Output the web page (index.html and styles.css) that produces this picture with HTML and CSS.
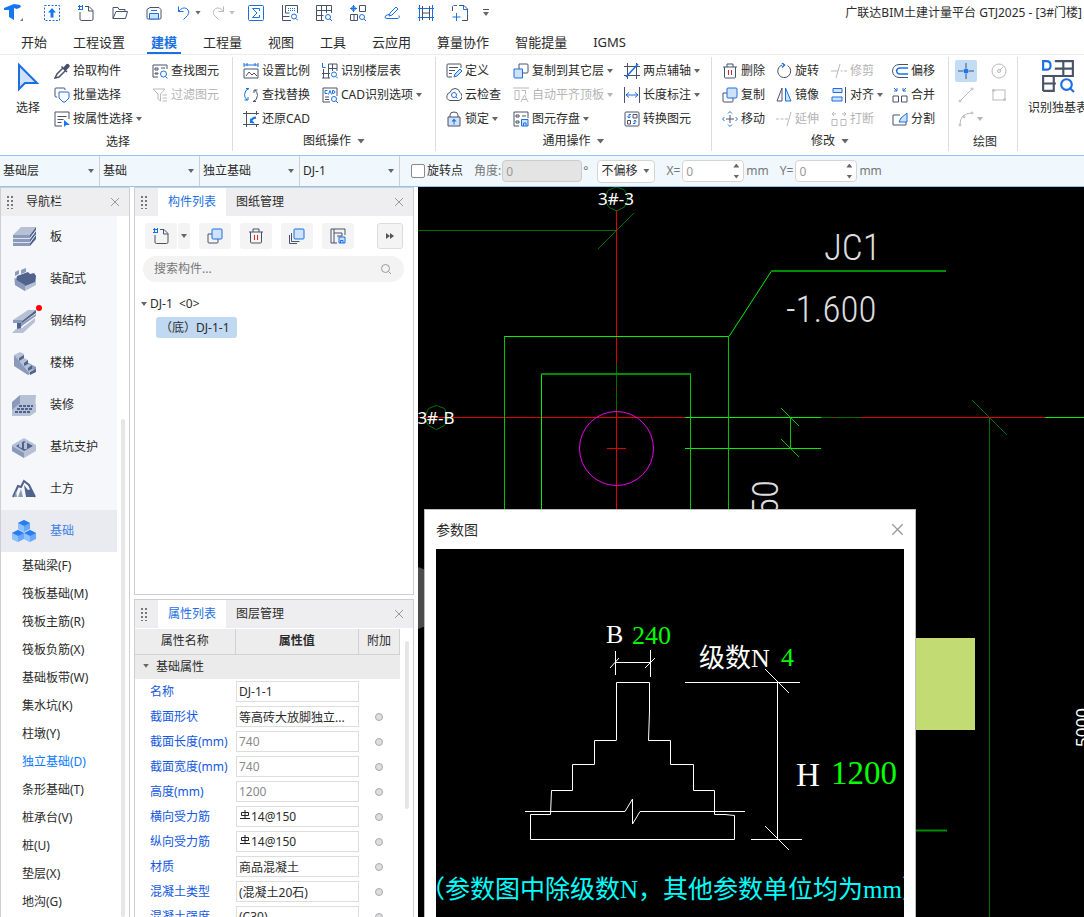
FILE: index.html
```html
<!DOCTYPE html>
<html lang="zh-CN">
<head>
<meta charset="utf-8">
<title>广联达BIM土建计量平台 GTJ2025</title>
<link rel="stylesheet" href="styles.css">
</head>
<body>
<svg class="defs" aria-hidden="true">
  <defs>
    <symbol id="logo" viewBox="0 0 20 20"><path class="fb" d="M0 5 10 1l6 1 1 2-4 2-3-1v12l-5-3V7L0 7z"/><path class="fg" d="M19 15v3h-3z"/></symbol>
    <symbol id="q-up" viewBox="0 0 16 16"><rect class="b" x=".5" y=".5" width="15" height="15" stroke-dasharray="2 1.500"/><path class="fb" d="M8 3l4 4.500H9.500v5h-3v-5H4z"/></symbol>
    <symbol id="q-new" viewBox="0 0 16 16"><path class="d" d="M7 1.500h4l4 4V14q0 1.500-1.500 1.500h-10Q2 15.500 2 14V7M10.500 1.500V6H15"/><path class="b" d="M0 1.500h5M0 4.500h5M1.500 0v5M4.500 0v5"/></symbol>
    <symbol id="q-open" viewBox="0 0 16 16"><path class="d" d="M1 13.500V2.500h5l1 2h6v2M1 13.500 4 6.500h11.500l-2 7z"/></symbol>
    <symbol id="q-save" viewBox="0 0 16 16"><path class="d" d="M4 2.500h9l2 2V13q0 1-1 1H2q-1 0-1-1V4.500z"/><path class="bf" d="M3.500 14V8.500h9V14z"/><path class="b" d="M5 5.500h6"/></symbol>
    <symbol id="q-undo" viewBox="0 0 16 16"><path class="b" d="M2.500 1.500v5h5M2.500 6.500q4-5 8-3 4 3 1 7l-4 4"/></symbol>
    <symbol id="q-redo" viewBox="0 0 16 16"><path class="g" d="M13.500 1.500v5h-5M13.500 6.500q-4-5-8-3-4 3-1 7l4 4"/></symbol>
    <symbol id="q-sum" viewBox="0 0 16 16"><rect class="b" x=".5" y=".5" width="15" height="15" rx="1"/><path class="b" d="M11.500 6V3.500h-7L9 8l-4.500 4.500h7V10"/></symbol>
    <symbol id="q-key" viewBox="0 0 16 16"><path class="d" d="M.5 0v15.500H9M3.500.5h12V8M3.500.5V8h4M.5 11.500h7"/><path class="b" d="M6 3.500h8M6 5.500h8" stroke-dasharray="1 1"/><circle class="b" cx="12" cy="11.500" r="2.500"/><path class="b" d="m14 13.500 2 2"/></symbol>
    <symbol id="q-grid" viewBox="0 0 16 16"><path class="d" d="M.5.5h15V8M.5.5v15H8M.5 5.500h15M.5 10.500h7M5.500.5v15M10.500.5V8"/><circle class="b" cx="12" cy="12" r="2.500"/><path class="b" d="m14 14 2 2"/></symbol>
    <symbol id="q-find" viewBox="0 0 16 16"><path class="d" d="M9.500.5h6v6h-6zM.5 9.500h7v6h-7zM4 9.500v6"/><path class="b" d="M3.500 0v7M0 3.500h7M1.500 3.500q0-2 2-2t2 2-2 2-2-2"/><circle class="b" cx="12" cy="12" r="2.500"/><path class="b" d="m14 14 2 2"/></symbol>
    <symbol id="q-pen" viewBox="0 0 16 16"><path class="b" d="M5 11l1-3 6-6 2 2-6 6zM5 9.500q-4 .5-4 2.500 0 1.500 2 1.500h11q2-1 1-3"/></symbol>
    <symbol id="q-beam" viewBox="0 0 16 16"><path class="b" d="M1.500 0v16M14.500 0v16M0 3.500h16M0 12.500h16"/><path class="d" d="M4.500 1v14M11.500 1v14M4.500 8h7"/></symbol>
    <symbol id="q-sel" viewBox="0 0 16 16"><path class="d" d="M7 .5h5l3.500 3.500v3M15.500 10v5.500H10M.5 6V1.500L1.500.5"/><path class="b" d="M2 .5h3M11.500.5V4.500h4M4.500 8v8M.5 12h8M15.500 7v3"/></symbol>
    <symbol id="arrow" viewBox="0 0 24 30"><path class="bf" stroke-width="2" d="M3 3v24l6-6h12z"/></symbol>
    <symbol id="pick" viewBox="0 0 16 16"><path class="df" d="M9 5l3-3.500q1.500-1.500 3 0t0 3L11.500 8z"/><path class="d" d="M7.500 3.500l5.500 5.500M9 5l-6 6-2 4 4-1 6-6" stroke-width="1.500"/></symbol>
    <symbol id="batch" viewBox="0 0 16 16"><path class="d" d="M3 10H2q-1 0-1-1V2q0-1 1-1h8q1 0 1 1v1"/><path class="bw" d="M5 5h9q1 0 1 1v5l-4 4H9l-4-4z"/></symbol>
    <symbol id="prop" viewBox="0 0 16 16"><path class="d" d="M8 15H1V1h14v7M3.500 5.500h9M3.500 8.500h6M3.500 11.500h4"/><path class="fb" d="M10 9v7l2-2h4z"/></symbol>
    <symbol id="find" viewBox="0 0 16 16"><path class="d" d="M6 14H1V2h14v4M3 5h3v2H3zM3 10h3v1H3zM9 5h4"/><circle class="b" cx="11.500" cy="11" r="3"/><path class="b" d="m13.500 13.500 2 2"/></symbol>
    <symbol id="filter" viewBox="0 0 16 16"><path class="g" d="M1 2h12L8.500 7v7L6 12V7zM10.500 8H15M10.500 11H15M10.500 14H15"/></symbol>
    <symbol id="scale" viewBox="0 0 16 16"><path class="b" d="M1 0v4M15 0v4M1 2h14M4 0v3M12 0v3"/><path class="d" d="M1 6h14v9H1zM3 13l3-4 3 3 2-2 3 3"/></symbol>
    <symbol id="swap" viewBox="0 0 16 16"><path class="b" d="M6 1.500q-4 1-4.500 6 0 3 2.500 5.500M1.500 13H5v-3M6 1.500H3"/><path class="d" d="M10 14.500q4-1 4.500-6 0-3-2.500-5.500M14.500 3H11v3M10 14.500h3"/></symbol>
    <symbol id="restore" viewBox="0 0 16 16"><path class="d" d="M3.500 0v16M0 2.500h16M0 13.500h16M13.500 0v4M13.500 13v3"/><path class="b" d="M13 6.500q-3 0-5 3" stroke-width="2"/><path class="fb" d="M7 7v5l5 .5z"/></symbol>
    <symbol id="floor" viewBox="0 0 16 16"><path class="d" d="M6.500 1H15v7M6.500 1v14M0 15h8M0 10.500h8M1.500 6v9M6.500 5.500H15M10.500 1v7"/><path class="b" d="M.5 0v4.500h3"/><circle class="b" cx="12" cy="11.500" r="2.500"/><path class="b" d="m14 13.500 2 2"/></symbol>
    <symbol id="cad" viewBox="0 0 16 16"><path class="d" d="M8 15H1V1h14v8M3 10h4M3 12.500h4"/><path class="b" d="M5.500 3.500H3v3h2.500M6.500 7.500l1.500-4 1.500 4M10.500 3.500q2.500 0 2.500 1.500t-2.500 1.500z"/><circle class="b" cx="12" cy="12" r="2.500"/><path class="b" d="m14 14 2 2"/></symbol>
    <symbol id="define" viewBox="0 0 16 16"><path class="d" d="M6 14H2q-1 0-1-1V2q0-1 1-1h12q1 0 1 1v3M3 4.500h9M3 7.500h6M3 10.500h3"/><path class="bf" d="m8 14 1-3 5-5 2 2-5 5z"/></symbol>
    <symbol id="cloud" viewBox="0 0 16 16"><path class="d" d="M4 13.500q-4-1-3-5 1-3 3-3 1-4 5-4t5 4q2 1 2 4t-3 4z"/><circle class="b" cx="8" cy="8" r="2.500"/><path class="b" d="m10 10 1.500 1.500"/></symbol>
    <symbol id="lock" viewBox="0 0 16 16"><path class="d" d="M4 6V4q0-3 4-3t4 3v2"/><path class="lk" d="M2 6h12v9H2z"/><path class="fb" d="M8 7.500l2.500 3h-2v3h-1v-3h-2z"/></symbol>
    <symbol id="copyto" viewBox="0 0 16 16"><path class="d" d="M6 1h8q1 0 1 1v7q0 1-1 1H6z"/><path class="bf" d="M1 6h8.500v9H2q-1 0-1-1z"/></symbol>
    <symbol id="align-top" viewBox="0 0 16 16"><path class="g" d="M0 1h16M2 3.500h4v9H2zM8.500 3.500h4v4M8 15l3.500-7L15 15M9.500 12.500h4"/></symbol>
    <symbol id="store" viewBox="0 0 16 16"><path class="d" d="M6 15H1V1h14v6M3 4h3v2H3zM3 10h3v2H3zM9 5h4"/><path class="bf" d="M8.500 8.500H15V15H8.500zM10.500 15v-3H13v3"/></symbol>
    <symbol id="axis" viewBox="0 0 16 16"><path class="d" d="M3.500 0v16M12.500 0v16M0 3.500h16M0 12.500h16"/><path class="b" d="M2 14 14 1" stroke-width="1.500"/></symbol>
    <symbol id="length" viewBox="0 0 16 16"><path class="d" d="M.5 0v16M15.500 0v16"/><path class="b" d="M2 8h12M5 5.500 2 8l3 2.500M11 5.500 14 8l-3 2.500"/></symbol>
    <symbol id="convert" viewBox="0 0 16 16"><rect class="d" x="1" y="1" width="14" height="14" rx="1"/><path class="d" d="M9 3.500h4V7H9zM3.500 9.500h3V13h-3z"/><path class="b" d="M7 3.500H5V7M3.500 5.500 5 7l1.500-1.500M9 12.500h2V9M9.500 10.500 11 9l1.500 1.500"/></symbol>
    <symbol id="trash" viewBox="0 0 16 16"><path class="d" d="M1 4h14M5 4V1h6v3M2.500 4v10q0 1 1 1h9q1 0 1-1V4"/><path class="r" d="M6.500 7v5M9.500 7v5"/></symbol>
    <symbol id="copy" viewBox="0 0 16 16"><path class="d" d="M5 6H1v8q0 1 1 1h8q1 0 1-1v-3"/><rect class="bf" x="5" y="1" width="10" height="10" rx="1"/></symbol>
    <symbol id="move" viewBox="0 0 16 16"><path class="d" d="M8 4v8M4 8h8"/><path class="b" d="M6 2.500 8 .5l2 2M6 13.500l2 2 2-2M2.500 6l-2 2 2 2M13.500 6l2 2-2 2"/></symbol>
    <symbol id="rotate" viewBox="0 0 16 16"><path class="d" d="M11.500 2.500A6.500 6.500 0 1 1 6 2"/><path class="b" d="M6 0l2.500 2L6 4.500" stroke-width="1.500"/></symbol>
    <symbol id="mirror" viewBox="0 0 16 16"><path class="d" d="M6 1v13H1z"/><path class="bf" d="M9.500 1v13H15z"/></symbol>
    <symbol id="extend" viewBox="0 0 16 16"><path class="g" d="M0 8h3M4.500 8h3M9 8h3M15 1 11 15"/></symbol>
    <symbol id="trim" viewBox="0 0 16 16"><path class="g" d="M0 8h7M9.500 8h2M13 8h3M9 1 5 15"/></symbol>
    <symbol id="align" viewBox="0 0 16 16"><path class="bf" d="M2 1.500h9v4H2zM1 10h10v4H1z"/><path class="d" d="M14.500 0v16"/></symbol>
    <symbol id="break" viewBox="0 0 16 16"><path class="g" d="M1 8.500h5v6H1zM10 8.500h5v6h-5zM5 3H1l2-2M1 3l2 2M11 3h4l-2-2M15 3l-2 2"/></symbol>
    <symbol id="offset" viewBox="0 0 16 16"><path class="d" d="M16 1.500H7Q1 2 .5 8q.5 6 6.500 6.500h9"/><path class="b" d="M16 5H8Q5 5 4.500 8 5 11 8 11h8" stroke-width="1.500"/></symbol>
    <symbol id="merge" viewBox="0 0 16 16"><path class="d" d="M1 9h5.500v6H1zM9.500 9H15v6H9.500z"/><path class="b" d="m2 1 3 3M5 1v3H2M14 1l-3 3M11 1v3h3"/></symbol>
    <symbol id="split" viewBox="0 0 16 16"><path class="d" d="M8 4H1v10h13v-3"/><path class="bf" d="m7 11 2-4 6-5v9z"/></symbol>
    <symbol id="point" viewBox="0 0 16 16"><path class="d" d="M8 0v5M8 11v5M0 8h5M11 8h5"/><circle class="fb" cx="8" cy="8" r="2.500"/></symbol>
    <symbol id="circle" viewBox="0 0 16 16"><circle class="g" cx="8" cy="8" r="7"/><circle class="g" cx="8" cy="8" r="1.500"/><path class="g" d="m9 7 3-3"/></symbol>
    <symbol id="line" viewBox="0 0 16 16"><path class="g" d="M3 13 13 3"/><circle class="g" cx="2" cy="14" r="1"/><circle class="g" cx="14" cy="2" r="1"/></symbol>
    <symbol id="rect" viewBox="0 0 16 16"><rect class="g" x="2" y="3" width="12" height="10"/><circle class="g" cx="2.500" cy="3.500" r="1"/><circle class="g" cx="13.500" cy="12.500" r="1"/></symbol>
    <symbol id="arc" viewBox="0 0 16 16"><path class="g" d="M2 13Q2 3 13 2"/><circle class="g" cx="2" cy="14" r="1"/><circle class="g" cx="14" cy="2" r="1"/><circle class="g" cx="6" cy="6" r="1"/></symbol>
    <symbol id="dgrid" viewBox="0 0 32 32"><path class="d" stroke-width="2" d="M13 2h17v15M13 9h17M21 2v14H2v14M12 16v14H2M2 23h12M21 9v7h9"/><path class="b" stroke-width="2" d="M2 2h3q4 0 4 4t-4 4H2z"/><circle class="b" stroke-width="2" cx="24" cy="24" r="5"/><path class="b" stroke-width="2" d="m27 27 4 4"/></symbol>
    <symbol id="layers" viewBox="0 0 16 16"><path class="d" d="M.5 7v8.500H8M2.500 5v8.500h8"/><rect class="bf" x="5" y="1" width="10" height="10" rx="1"/></symbol>
    <symbol id="tmpl" viewBox="0 0 16 16"><path class="d" d="M7 15H1V1h14v6M4 1v14M4 5h8v3M7 8h5"/><path class="bf" d="M9 9h6v6H9zM10.500 15v-2.500H13V15"/></symbol>
    <symbol id="glass" viewBox="0 0 12 12"><circle class="m" cx="5.500" cy="5.500" r="4"/><path class="m" d="m8.500 8.500 2.500 2.500"/></symbol>
    <symbol id="close" viewBox="0 0 10 10"><path class="m" d="m1 1 8 8M9 1 1 9"/></symbol>
    <symbol id="n-slab" viewBox="0 0 24 24"><path class="n2" d="M1 10h17v11H1z"/><path class="n1" d="M1 10 9 2h15l-6 8z"/><path class="n3" d="m18 10 6-8v3l-6 8zM18 14l6-8v4l-6 7zM18 18l6-8v4l-6 7z"/><path class="nl" d="M1 13.500h17l6-8M1 17.500h17l6-8"/></symbol>
    <symbol id="n-pre" viewBox="0 0 24 24"><path class="n1" d="M2 11 24 8v10l-11 6-10-6z"/><path class="n3" d="m5 9 11-4 2 2 4-1 2 3-1 6-10 4-9-5z"/><path class="n2" d="m3 12 10 6v6L3 18zM3 5l4-2v4L3 9zM9 3l5-2v4L9 7z"/></symbol>
    <symbol id="n-steel" viewBox="0 0 24 24"><path class="n1" d="M1 11 16 1h8L10 12z"/><path class="n2" d="M1 11h9v3L24 5v2l-13 9-6 6v-8H1z"/><path class="n3" d="M5 14h4v7H5zM10 12 24 1v3L10 14z"/><path class="n1" d="m10 19 13-10v4L11 24H0l4-4z"/></symbol>
    <symbol id="n-stair" viewBox="0 0 24 24"><path class="n2" d="M2 4v11l14 9 8-4v-4z"/><path class="n1" d="m2 4 6-3 4 2v4l4 2v4l4 1v4l4 2-6 3z"/><path class="n3" d="m7 7 5-3v3l-5 3zM12 12l4-3v4l-4 2zM16 17l4-3v4l-4 2zM18 21l6-3v3l-6 3z"/></symbol>
    <symbol id="n-deco" viewBox="0 0 24 24"><path class="n1" d="M8 2h16l-1 14H8z"/><path class="n2" d="m0 9 8-7v10l-8 7z"/><path class="n1" d="m0 17 7-6h17v8l-6 4H0z"/><path class="nd" d="M7 13h14M5 16h15M3 19h15"/></symbol>
    <symbol id="n-pit" viewBox="0 0 24 24"><path class="n1" d="m0 10 12-7 12 7v6l-12 7-12-7z"/><path class="n3" d="m4 11 8-5 9 5-9 5z"/><path class="n2" d="m0 11 12 7v5L0 16z"/><path class="n1" d="M7 9l3-2v6l-3-1zM12 8l3-2v8h-3z"/></symbol>
    <symbol id="n-earth" viewBox="0 0 24 24"><path class="ne" d="m1 20 5-11 3 1 3-6 5 4 6 12"/><path class="n2" d="m9 12-3 8h5zM4 14l-2 6h3z"/><path class="n3" d="m12 8 2 12h9l-4-8-3 1z"/></symbol>
    <symbol id="n-base" viewBox="0 0 24 24"><path class="c1" d="m6 4 6-3 6 3v6l-6 3-6-3z"/><path class="c2" d="m6 4 6-3 6 3-6 3z"/><path class="c1" d="m0 14 6-3 6 3v6l-6 3-6-3z"/><path class="c2" d="m0 14 6-3 6 3-6 3z"/><path class="c1" d="m12 14 6-3 6 3v6l-6 3-6-3z"/><path class="c2" d="m12 14 6-3 6 3-6 3z"/><path class="c3" d="M6 4l6 3v6l-6-3zM0 14l6 3v6l-6-3zM12 14l6 3v6l-6-3z"/></symbol>
  </defs>
</svg>

<header class="titlebar">
  <svg class="logo"><use href="#logo"/></svg>
  <div class="quick">
    <button aria-label="升级"><svg><use href="#q-up"/></svg></button>
    <button aria-label="新建"><svg><use href="#q-new"/></svg></button>
    <button aria-label="打开"><svg><use href="#q-open"/></svg></button>
    <button aria-label="保存"><svg><use href="#q-save"/></svg></button>
    <button aria-label="撤销" class="has-caret"><svg><use href="#q-undo"/></svg><i class="caret"></i></button>
    <button aria-label="恢复" class="has-caret dim"><svg><use href="#q-redo"/></svg><i class="caret"></i></button>
    <button aria-label="汇总"><svg><use href="#q-sum"/></svg></button>
    <button aria-label="查看"><svg><use href="#q-key"/></svg></button>
    <button aria-label="查看报表"><svg><use href="#q-grid"/></svg></button>
    <button aria-label="查找"><svg><use href="#q-find"/></svg></button>
    <button aria-label="编辑"><svg><use href="#q-pen"/></svg></button>
    <button aria-label="梁"><svg><use href="#q-beam"/></svg></button>
    <button aria-label="框选"><svg><use href="#q-sel"/></svg></button>
    <button aria-label="更多" class="more"><i class="caret"></i></button>
  </div>
  <div class="app-title">广联达BIM土建计量平台 GTJ2025 - [3#门楼]</div>
</header>

<nav class="menu">
  <button>开始</button><button>工程设置</button><button class="on">建模</button><button>工程量</button><button>视图</button><button>工具</button><button>云应用</button><button>算量协作</button><button>智能提量</button><button>IGMS</button>
</nav>

<section class="ribbon">
  <div class="group g-select">
    <div class="tools">
      <button class="big"><svg><use href="#arrow"/></svg>选择</button>
      <div class="col">
        <button class="tool"><svg><use href="#pick"/></svg>拾取构件</button>
        <button class="tool"><svg><use href="#batch"/></svg>批量选择</button>
        <button class="tool"><svg><use href="#prop"/></svg>按属性选择<i class="caret"></i></button>
      </div>
      <div class="col">
        <button class="tool"><svg><use href="#find"/></svg>查找图元</button>
        <button class="tool" disabled><svg><use href="#filter"/></svg>过滤图元</button>
      </div>
    </div>
    <div class="caption">选择</div>
  </div>
  <div class="group g-paper">
    <div class="tools">
      <div class="col">
        <button class="tool"><svg><use href="#scale"/></svg>设置比例</button>
        <button class="tool"><svg><use href="#swap"/></svg>查找替换</button>
        <button class="tool"><svg><use href="#restore"/></svg>还原CAD</button>
      </div>
      <div class="col">
        <button class="tool"><svg><use href="#floor"/></svg>识别楼层表</button>
        <button class="tool"><svg><use href="#cad"/></svg>CAD识别选项<i class="caret"></i></button>
      </div>
    </div>
    <div class="caption">图纸操作<i class="caret wide"></i></div>
  </div>
  <div class="group g-common">
    <div class="tools">
      <div class="col">
        <button class="tool"><svg><use href="#define"/></svg>定义</button>
        <button class="tool"><svg><use href="#cloud"/></svg>云检查</button>
        <button class="tool"><svg><use href="#lock"/></svg>锁定<i class="caret"></i></button>
      </div>
      <div class="col">
        <button class="tool"><svg><use href="#copyto"/></svg>复制到其它层<i class="caret"></i></button>
        <button class="tool" disabled><svg><use href="#align-top"/></svg>自动平齐顶板<i class="caret"></i></button>
        <button class="tool"><svg><use href="#store"/></svg>图元存盘<i class="caret"></i></button>
      </div>
      <div class="col">
        <button class="tool"><svg><use href="#axis"/></svg>两点辅轴<i class="caret"></i></button>
        <button class="tool"><svg><use href="#length"/></svg>长度标注<i class="caret"></i></button>
        <button class="tool"><svg><use href="#convert"/></svg>转换图元</button>
      </div>
    </div>
    <div class="caption">通用操作<i class="caret wide"></i></div>
  </div>
  <div class="group g-modify">
    <div class="tools">
      <div class="col">
        <button class="tool"><svg><use href="#trash"/></svg>删除</button>
        <button class="tool"><svg><use href="#copy"/></svg>复制</button>
        <button class="tool"><svg><use href="#move"/></svg>移动</button>
      </div>
      <div class="col">
        <button class="tool"><svg><use href="#rotate"/></svg>旋转</button>
        <button class="tool"><svg><use href="#mirror"/></svg>镜像</button>
        <button class="tool" disabled><svg><use href="#extend"/></svg>延伸</button>
      </div>
      <div class="col">
        <button class="tool" disabled><svg><use href="#trim"/></svg>修剪</button>
        <button class="tool"><svg><use href="#align"/></svg>对齐<i class="caret"></i></button>
        <button class="tool" disabled><svg><use href="#break"/></svg>打断</button>
      </div>
      <div class="col">
        <button class="tool"><svg><use href="#offset"/></svg>偏移</button>
        <button class="tool"><svg><use href="#merge"/></svg>合并</button>
        <button class="tool"><svg><use href="#split"/></svg>分割</button>
      </div>
    </div>
    <div class="caption">修改<i class="caret wide"></i></div>
  </div>
  <div class="group g-draw">
    <div class="tools">
      <div class="col">
        <button class="tool on" aria-label="点"><svg><use href="#point"/></svg></button>
        <button class="tool" aria-label="直线"><svg><use href="#line"/></svg></button>
        <button class="tool" aria-label="弧" disabled><svg><use href="#arc"/></svg><i class="caret"></i></button>
      </div>
      <div class="col">
        <button class="tool" aria-label="圆"><svg><use href="#circle"/></svg></button>
        <button class="tool" aria-label="矩形"><svg><use href="#rect"/></svg></button>
      </div>
    </div>
    <div class="caption">绘图</div>
  </div>
  <div class="group g-recog">
    <div class="tools"><button class="big"><svg><use href="#dgrid"/></svg>识别独基表</button></div>
  </div>
</section>

<section class="options">
  <div class="pick"><select aria-label="楼层"><option>基础层</option></select><i class="caret"></i></div>
  <div class="pick"><select aria-label="类别"><option>基础</option></select><i class="caret"></i></div>
  <div class="pick"><select aria-label="构件类型"><option>独立基础</option></select><i class="caret"></i></div>
  <div class="pick"><select aria-label="构件"><option>DJ-1</option></select><i class="caret"></i></div>
  <label class="check"><input type="checkbox">旋转点</label>
  <label class="field angle">角度:<input type="text" value="0" disabled>°</label>
  <div class="pick boxed"><select aria-label="偏移方式"><option>不偏移</option></select><i class="caret"></i></div>
  <label class="field">X=<span class="spin"><input type="text" value="0"><i class="caret up"></i><i class="caret"></i></span>mm</label>
  <label class="field">Y=<span class="spin"><input type="text" value="0"><i class="caret up"></i><i class="caret"></i></span>mm</label>
</section>

<main class="work">
  <aside class="navigator">
    <div class="bar"><i class="grip"></i><span>导航栏</span><button class="x" aria-label="关闭"><svg><use href="#close"/></svg></button></div>
    <div class="scroller">
      <div class="lists">
        <ul class="cats">
          <li><svg><use href="#n-slab"/></svg>板</li>
          <li><svg><use href="#n-pre"/></svg>装配式</li>
          <li class="dot"><svg><use href="#n-steel"/></svg>钢结构</li>
          <li><svg><use href="#n-stair"/></svg>楼梯</li>
          <li><svg><use href="#n-deco"/></svg>装修</li>
          <li><svg><use href="#n-pit"/></svg>基坑支护</li>
          <li><svg><use href="#n-earth"/></svg>土方</li>
          <li class="on"><svg><use href="#n-base"/></svg>基础</li>
        </ul>
        <ul class="subs">
          <li>基础梁(F)</li><li>筏板基础(M)</li><li>筏板主筋(R)</li><li>筏板负筋(X)</li><li>基础板带(W)</li><li>集水坑(K)</li><li>柱墩(Y)</li><li class="on">独立基础(D)</li><li>条形基础(T)</li><li>桩承台(V)</li><li>桩(U)</li><li>垫层(X)</li><li>地沟(G)</li>
        </ul>
      </div>
      <div class="track"><div class="thumb"></div></div>
    </div>
  </aside>

  <div class="side">
    <section class="panel components">
      <div class="bar"><i class="grip"></i><button class="tab on">构件列表</button><button class="tab">图纸管理</button><button class="x" aria-label="关闭"><svg><use href="#close"/></svg></button></div>
      <div class="actions">
        <div class="split"><button aria-label="新建"><svg><use href="#q-new"/></svg></button><button class="drop" aria-label="新建选项"><i class="caret"></i></button></div>
        <button aria-label="复制"><svg><use href="#copy"/></svg></button>
        <button aria-label="删除"><svg><use href="#trash"/></svg></button>
        <button aria-label="层间复制"><svg><use href="#layers"/></svg></button>
        <button aria-label="存档"><svg><use href="#tmpl"/></svg></button>
        <button class="next" aria-label="更多"><i class="fwd"></i><i class="fwd"></i></button>
      </div>
      <label class="search"><input type="text" placeholder="搜索构件..." aria-label="搜索构件"><svg><use href="#glass"/></svg></label>
      <div class="tree">
        <div class="node"><i class="caret"></i>DJ-1&nbsp; &lt;0&gt;</div>
        <div class="leaf">（底）DJ-1-1</div>
      </div>
    </section>

    <section class="panel props">
      <div class="bar"><i class="grip"></i><button class="tab on">属性列表</button><button class="tab">图层管理</button><button class="x" aria-label="关闭"><svg><use href="#close"/></svg></button></div>
      <div class="sheet">
        <table>
          <thead><tr><th class="plain">属性名称</th><th>属性值</th><th class="plain">附加</th></tr></thead>
          <tbody>
            <tr class="section"><td colspan="3"><i class="caret"></i>基础属性</td></tr>
            <tr><td><label for="p1">名称</label></td><td><input id="p1" value="DJ-1-1"></td><td></td></tr>
            <tr><td><label for="p2">截面形状</label></td><td><input id="p2" value="等高砖大放脚独立..."></td><td><input type="radio" aria-label="附加截面形状"></td></tr>
            <tr><td><label for="p3">截面长度(mm)</label></td><td><input id="p3" class="ro" value="740" readonly></td><td><input type="radio" aria-label="附加截面长度"></td></tr>
            <tr><td><label for="p4">截面宽度(mm)</label></td><td><input id="p4" class="ro" value="740" readonly></td><td><input type="radio" aria-label="附加截面宽度"></td></tr>
            <tr><td><label for="p5">高度(mm)</label></td><td><input id="p5" class="ro" value="1200" readonly></td><td><input type="radio" aria-label="附加高度"></td></tr>
            <tr><td><label for="p6">横向受力筋</label></td><td class="bar-mark"><svg viewBox="0 0 10 10"><path d="M5 0v9M1.500 2.500h7v3h-7zM0 8.500h10"/></svg><input id="p6" value="14@150"></td><td><input type="radio" aria-label="附加横向受力筋"></td></tr>
            <tr><td><label for="p7">纵向受力筋</label></td><td class="bar-mark"><svg viewBox="0 0 10 10"><path d="M5 0v9M1.500 2.500h7v3h-7zM0 8.500h10"/></svg><input id="p7" value="14@150"></td><td><input type="radio" aria-label="附加纵向受力筋"></td></tr>
            <tr><td><label for="p8">材质</label></td><td><input id="p8" value="商品混凝土"></td><td><input type="radio" aria-label="附加材质"></td></tr>
            <tr><td><label for="p9">混凝土类型</label></td><td><input id="p9" value="(混凝土20石)"></td><td><input type="radio" aria-label="附加混凝土类型"></td></tr>
            <tr><td><label for="p10">混凝土强度</label></td><td><input id="p10" value="(C30)"></td><td><input type="radio" aria-label="附加混凝土强度"></td></tr>
          </tbody>
        </table>
        <div class="track"><div class="thumb"></div></div>
      </div>
    </section>
  </div>

  <div class="canvas">
    <svg class="drawing">
      <g transform="translate(-418 -187)">
        <g class="line dark"><path d="M418 230.500H616"/><path d="M598 249l36-36"/><path d="M989.500 417V917"/><path d="M972 400l35 35"/></g>
        <path class="line red" d="M616.500 210V364M616.500 388v2M616.500 411V520M418 417.500H685M833 417.500h2M861 417.500H1045M607 448.500h19"/>
        <path class="line dark" d="M616.500 364v24M616.500 390v21M821 417.500h12M835 417.500h26"/>
        <path class="line lime" d="M504 336.500H729L771.500 271M541.500 374V520M685 417.500H821M685 448.500H821M1045 417.500H1400"/>
        <path class="line green" d="M504.500 336V520M728.500 336V520M690.500 374V520M790.500 417v32M781 408l18 18M781 439l18 18"/>
        <path class="line heavy" d="M771 271H946M541 374H691M915 830.500H947"/>
        <circle class="magenta" cx="616.500" cy="448.500" r="37"/>
        <path class="bubble" d="M616.500 187l8 3 4 8-4 9-8 4-8-4-4-9 4-8zM436.500 405.500l8 3 4 9-4 8-8 4-8-4-4-8 4-9z"/>
        <rect class="block" x="910" y="638" width="65" height="92"/>
        <text class="axis-name" x="616" y="205" text-anchor="middle">3#-3</text>
        <text class="axis-name" x="436" y="424" text-anchor="middle">3#-B</text>
        <text class="cad-text" x="824" y="260">JC1</text>
        <text class="cad-text" x="786" y="322">-1.600</text>
        <text class="cad-text" transform="translate(778 480) rotate(-90)" text-anchor="end">50</text>
        <text class="axis-name" transform="translate(1088 747) rotate(-90)">5000</text>
      </g>
    </svg>
    <div class="handle"></div>
    <section class="dialog">
      <div class="dialog-head"><h2>参数图</h2><button aria-label="关闭"><svg><use href="#close"/></svg></button></div>
      <svg class="section-view">
        <g transform="translate(-436 -549)">
          <path class="line white" d="M616.500 740V682.500H649.500V711L648.500 740.500H670.500V764.500H693.500V790.500H714.500V814.500H725L734.500 815.500V839.500H530.500V814.500H550.500L551.500 790.500H572.500V764.500H594.500V740.500H616.500"/>
          <path class="line white" d="M525 811.500H625L632.500 799V824L640 811.500H745"/>
          <path class="line white" d="M615.500 651V675M650.500 650V677M615 662.500H650M610 668l9-10M645 668l10-10"/>
          <path class="line white" d="M685 682.500H800M777.500 682V839M765 669l24 24M751 839.500H802M765 826l24 24"/>
          <text class="w" x="606" y="643">B</text><text class="v" x="632" y="644">240</text>
          <text class="w" x="699" y="667">级数N</text><text class="v" x="781" y="666">4</text>
          <text class="w lg" x="796" y="786">H</text><text class="v lg" x="831" y="784">1200</text>
          <text class="note" x="420" y="898">（参数图中除级数N，其他参数单位均为mm）</text>
        </g>
      </svg>
    </section>
  </div>
</main>
</body>
</html>
```

FILE: styles.css
```css
:root { --ink: #2b2b2b; --blue: #1a6fe3; --slate: #48536a; --line: #cfcfd2; --soft: #eeeef0; }
* { box-sizing: border-box; }
body {
  margin: 0; height: 100vh; display: flex; flex-direction: column; overflow: hidden;
  background: #fff; color: var(--ink);
  font: 12px/18px "Noto Sans", "Noto Sans CJK SC", sans-serif;
}
button, input, select { font: inherit; color: inherit; }
button { border: 0; background: none; padding: 0; white-space: nowrap; }
ul { list-style: none; margin: 0; padding: 0; }
svg { display: block; flex: none; }
.defs { position: absolute; width: 0; height: 0; }

/* icon strokes */
.d, .b, .g, .m, .r, .bf, .bw, .lk { fill: none; stroke: var(--slate); }
.b { stroke: var(--blue); }
.g { stroke: #b9b9b9; }
.m { stroke: #999; }
.r { stroke: #d9262c; }
.bf { fill: #cfe2fa; stroke: var(--blue); }
.bw { fill: #fff; stroke: var(--blue); }
.lk { fill: #cfe2fa; }
.df { fill: var(--slate); }
.fb { fill: #1677f0; }
.fg { fill: #777; }
.n1 { fill: #b6c1d6; } .n2 { fill: #8b9abb; } .n3 { fill: #50638c; }
.nl { fill: none; stroke: #dce3ef; }
.nd { fill: none; stroke: #50638c; stroke-width: 2; stroke-dasharray: 3 1; }
.ne { fill: none; stroke: #50638c; stroke-width: 2; }
.c1 { fill: #66a9fb; } .c2 { fill: #2b7cf4; } .c3 { fill: #8cc0ff; }

.caret { flex: none; width: 6px; height: 4px; background: #666; clip-path: polygon(0 0, 100% 0, 50% 100%); }
.caret.wide { width: 8px; height: 5px; }
.caret.up { clip-path: polygon(50% 0, 100% 100%, 0 100%); }

/* title bar */
.titlebar { display: flex; align-items: center; height: 25px; flex: none; }
.logo { width: 20px; height: 20px; margin: 0 20px 0 4px; }
.quick { display: flex; gap: 18px; }
.quick button { width: 16px; display: flex; align-items: center; }
.quick svg { width: 16px; height: 16px; }
.quick .has-caret { width: 25px; gap: 3px; margin: 0 -5px 0 -4px; }
.dim .caret { background: #bbb; }
.quick .more { width: 6px; margin-left: -3px; flex-direction: column; justify-content: center; gap: 2px; }
.more::before { content: ""; width: 6px; height: 1px; background: #555; }
.app-title { margin-left: auto; padding-right: 2px; white-space: nowrap; }

.menu { display: flex; gap: 18px; height: 30px; padding: 0 17px; flex: none; border-bottom: 1px solid #ececec; font-size: 13px; }
.menu button { height: 29px; padding: 7px 4px 0; border-bottom: 2px solid transparent; }
.menu .on { color: var(--blue); font-weight: bold; border-color: var(--blue); }

/* ribbon */
.ribbon { display: flex; height: 100px; flex: none; overflow: hidden; }
.group { display: flex; flex-direction: column; flex: none; border-right: 1px solid #ddd; margin: 2px 0 4px; }
.tools { display: grid; height: 74px; padding: 2px 0 0 10px; align-content: start; }
.col { display: flex; flex-direction: column; align-items: flex-start; }
.tool { display: flex; align-items: center; gap: 3px; height: 24px; }
.tool svg { width: 16px; height: 16px; }
.tool:disabled { color: #b4b4b4; }
.tool:disabled .caret { background: #b4b4b4; }
.big { display: flex; flex-direction: column; align-items: center; }
.caption { display: flex; align-items: center; justify-content: center; gap: 6px; height: 24px; }
.g-select { width: 233px; }
.g-select .tools { grid-template-columns: 44px 98px 1fr; }
.g-select .caption { padding: 2px 0 0 4px; }
.big svg { width: 24px; height: 30px; margin: 3px 0 7px; }
.g-select .big { width: 36px; }
.g-paper { width: 203px; }
.g-paper .tools { grid-template-columns: 79px 1fr; }
.g-common { width: 276px; }
.g-common .tools { grid-template-columns: 67px 111px 1fr; }
.g-modify { width: 237px; }
.g-modify .tools { grid-template-columns: 54px 55px 61px 1fr; }
.g-draw { width: 69px; }
.g-draw .tools { grid-template-columns: 33px 1fr; padding-left: 6px; }
.g-draw .caption { padding: 2px 0 0 4px; }
.g-draw .tool { padding: 0 3px; }
.g-draw .on { background: #c3dbf5; height: 22px; margin: 1px 0; border-radius: 2px; }
.g-recog { flex: 1; border: 0; min-width: 76px; }
.g-recog .tools { justify-content: start; }
.g-recog .big svg { width: 34px; height: 34px; margin: 0 0 6px; }

/* option bar */
.options { display: flex; align-items: center; height: 32px; flex: none; background: #f1f8fd; border: solid #92c3f6; border-width: 1px 0; white-space: nowrap; color: #777; }
.pick { width: 100px; height: 30px; display: flex; align-items: center; border-right: 1px solid var(--line); padding: 0 5px 0 3px; color: var(--ink); }
.pick select { appearance: none; border: 0; background: none; flex: 1; min-width: 0; padding: 0; }
.check { display: flex; align-items: center; gap: 2px; margin-left: 11px; color: var(--ink); }
.check input { appearance: none; width: 14px; height: 14px; margin: 0; border: 1px solid #8a8a8a; border-radius: 2px; background: #fff; }
.field { display: flex; align-items: center; gap: 2px; margin-left: 11px; }
.field input { height: 22px; border: 1px solid #d5d5d5; border-radius: 4px; background: #fff; padding: 0 3px; width: 62px; color: #999; }
.field.angle { gap: 1px; }
.angle input { width: 80px; background: #e4e4e4; border-color: #ccc; }
.pick.boxed { width: 58px; height: 23px; margin: 0 0 0 9px; border: 1px solid #d5d5d5; border-radius: 4px; background: #fff; }
.spin { display: grid; grid-template-columns: 1fr 6px 5px; align-items: center; }
.spin input { grid-area: 1 / 1 / 3 / 4; }
.spin .caret { grid-area: 2 / 2; }
.spin .caret.up { grid-area: 1 / 2; }

/* work area */
.work { display: flex; flex: 1; min-height: 0; }
.bar { display: flex; align-items: center; flex: none; height: 28px; background: var(--soft); }
.grip { width: 8px; height: 14px; margin: 0 6px 0 5px; background: radial-gradient(circle, #777 1px, transparent 1px) 0 0 / 4px 4px; }
.x { margin-left: auto; padding-right: 9px; }
.x svg { width: 10px; height: 10px; }
.track { flex: none; width: 4px; }
.thumb { height: 100%; border-radius: 2px; background: #e6e6e6; }

.navigator { width: 130px; flex: none; border: 1px solid var(--line); border-bottom: 0; display: flex; flex-direction: column; }
.navigator .bar span { margin-left: 6px; }
.scroller { display: flex; flex: 1; min-height: 0; gap: 4px; }
.lists { width: 116px; overflow: hidden; }
.scroller .track { padding-top: 203px; }
.cats { background: #f5f7fa; }
.cats li { display: flex; align-items: center; height: 42px; padding-left: 11px; gap: 14px; position: relative; }
.cats svg { width: 24px; height: 24px; }
.cats .on { background: #e9ebf0; color: #3f80e6; }
.dot::after { content: ""; position: absolute; left: 35px; top: 5px; width: 6px; height: 6px; border-radius: 50%; background: #f00; }
.subs li { height: 28px; line-height: 28px; padding-left: 21px; }
.subs .on { color: #0b7bff; }

.side { display: flex; flex-direction: column; gap: 4px; width: 280px; flex: none; margin: 0 4px; }
.panel { border: 1px solid var(--line); display: flex; flex-direction: column; overflow: hidden; }
.components { flex: none; height: 408px; }
.props { flex: 1; min-height: 0; border-bottom: 0; }
.tab { align-self: stretch; padding: 0 10px; }
.panel .grip { margin-right: 10px; }
.tab.on { background: #fff; color: var(--blue); }
.actions { display: flex; gap: 9px; padding: 7px 10px 0; }
.actions button { width: 32px; height: 26px; display: grid; place-items: center; background: #f4f4f5; border-radius: 3px; }
.actions svg { width: 16px; height: 16px; }
.split { display: flex; gap: 1px; }
.actions .drop { width: 12px; }
.actions .next { width: 26px; margin-left: auto; border: 1px solid #ddd; display: flex; align-items: center; justify-content: center; }
.fwd { width: 4px; height: 6px; background: #555; clip-path: polygon(0 0, 100% 50%, 0 100%); }
.search { display: flex; align-items: center; height: 26px; margin: 7px 9px 0 8px; padding: 0 12px 0 11px; background: #f3f3f4; border-radius: 13px; }
.search input { flex: 1; min-width: 0; border: 0; background: none; padding: 0; }
.search input::placeholder { color: #777; opacity: 1; }
.search svg { width: 12px; height: 12px; }
.tree { padding: 12px 6px; }
.node { display: flex; align-items: center; gap: 3px; height: 20px; }
.leaf { display: inline-block; margin: 3px 0 0 15px; padding: 2px 7px 1px 4px; background: #c0d8f1; border-radius: 3px; }

.sheet { display: flex; gap: 5px; padding-top: 1px; }
.sheet .track { padding-top: 12px; height: 180px; }
table { width: 265px; table-layout: fixed; border-collapse: collapse; }
th { height: 25px; padding: 0; background: #ededee; border: solid #d2d2d2; border-width: 0 1px 1px 0; }
th:nth-child(1) { width: 100px; }
th:nth-child(3) { width: 41px; }
.plain { font-weight: normal; }
td { height: 25px; padding: 0; }
td:first-child { padding-left: 15px; color: #1458e0; white-space: nowrap; }
td:nth-child(2) { padding-left: 1px; }
td:last-child { text-align: center; }
.section td { background: #ebebec; color: var(--ink); text-align: left; padding-left: 8px; }
.section .caret { display: inline-block; margin: 0 7px 3px 0; }
td input { display: block; width: 123px; height: 21px; padding: 0 2px; border: 1px solid #ddd; background: #fff; }
td .ro { color: #8a8a8a; }
.bar-mark { position: relative; }
.bar-mark input { padding-left: 14px; }
.bar-mark svg { position: absolute; left: 5px; top: 6px; width: 10px; height: 10px; fill: none; stroke: #222; }
td input[type="radio"] { appearance: none; width: 8px; height: 8px; margin: 0 auto; border: 1px solid #aaa; border-radius: 50%; background: #dedee2; }

/* model view */
.canvas { flex: 1; min-width: 0; position: relative; overflow: hidden; background: #000; }
.drawing { width: 100%; height: 100%; }
.line { fill: none; stroke-width: 1; }
.dark { stroke: #006e00; }
.red { stroke: #e00000; }
.lime { stroke: #00f000; }
.green { stroke: #00c400; }
.heavy { stroke: #008c00; stroke-width: 2; }
.white { stroke: #fff; }
.magenta { fill: none; stroke: #f000f0; }
.bubble { fill: none; stroke: #007000; }
.block { fill: #c2dc73; }
.axis-name { font-size: 17px; fill: #fff; }
.cad-text { font: 300 37px "Liberation Sans Narrow", "Roboto Condensed", "Roboto", sans-serif; fill: #ddd; }
.handle { position: absolute; left: 0; top: 380px; width: 10px; height: 62px; background: #4c4c4c; clip-path: polygon(0 0, 100% 6%, 100% 94%, 0 100%); }
.dialog { position: absolute; left: 6px; top: 322px; bottom: -20px; width: 492px; padding: 0 11px; display: flex; flex-direction: column; background: #fff; border: 1px solid #bbb; }
.dialog-head { display: flex; align-items: center; justify-content: space-between; height: 39px; flex: none; }
.dialog-head h2 { margin: 0; font-size: 14px; font-weight: normal; }
.dialog-head svg { width: 13px; height: 13px; }
.section-view { width: 100%; flex: 1; background: #000; font: 26px "Liberation Serif", "Noto Sans CJK SC", serif; }
.w { fill: #fff; }
.v { fill: #0f0; }
.lg { font-size: 33px; }
.note { fill: #0ff; font-size: 25px; }
```
